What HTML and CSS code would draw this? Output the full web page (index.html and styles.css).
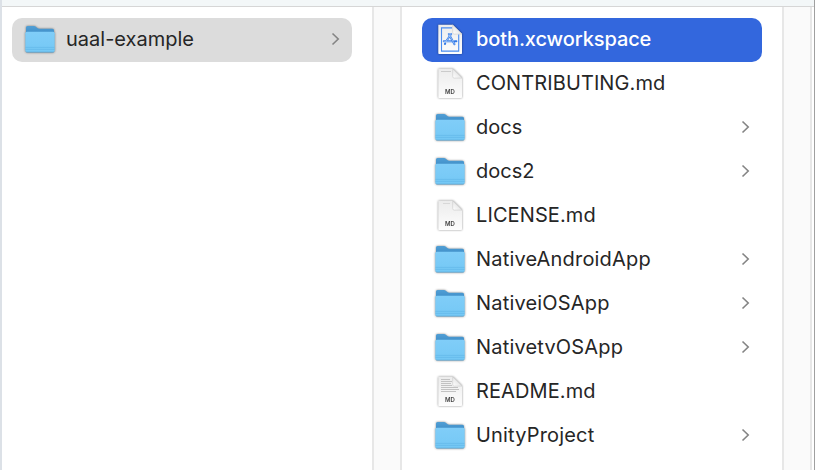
FILE: index.html
```
<!DOCTYPE html>
<html lang="en">
<head>
<meta charset="utf-8">
<title>uaal-example</title>
<link rel="stylesheet" href="styles.css">
</head>
<body>
<svg class="defs" width="0" height="0" aria-hidden="true">
  <defs>
    <linearGradient id="front" x1="0" y1="0" x2="0" y2="1"><stop offset="0" stop-color="#80cdf8"/><stop offset="1" stop-color="#74c8f5"/></linearGradient>
    <linearGradient id="back" x1="0" y1="0" x2="0" y2="1"><stop offset="0" stop-color="#519fd5"/><stop offset="1" stop-color="#307fbd"/></linearGradient>
    <linearGradient id="paper" x1="0" y1="0" x2="0" y2="1"><stop offset="0" stop-color="#ececec"/><stop offset="1" stop-color="#fdfdfd"/></linearGradient>
    <linearGradient id="fold" x1="0" y1="1" x2="1" y2="0"><stop offset="0" stop-color="#ffffff"/><stop offset="1" stop-color="#d4d4d4"/></linearGradient>
  </defs>
  <symbol id="folder" viewBox="0 0 32 36">
    <path d="M2 5.500Q2 4 3.500 4H10q1 0 1.800.8l1.500 1.200q.8.800 1.900.800h13.300q1.500 0 1.500 1.500V18H2z" fill="url(#back)"/>
    <path d="M1.300 11.300Q1.300 9.800 2.800 9.800h26.400q1.500 0 1.500 1.500v17.200q0 1.700-1.700 1.700H3q-1.700 0-1.700-1.700z" fill="url(#front)"/>
    <path d="M1.500 25.400h29M1.500 27.400h29" stroke="#5fb4e5" stroke-width=".6"/>
    <path d="M1.800 29.700q.5.500 1.200.5h26q.7 0 1.200-.5" fill="none" stroke="#4c96c3" stroke-width=".6"/>
  </symbol>
  <symbol id="page" viewBox="0 0 32 36">
    <path d="M4.300 2.800h14.400l9.300 9.300v19.200q0 .8-.8.800H5.100q-.8 0-.8-.8z" fill="url(#paper)"/>
    <path d="M18.700 2.800v7.700q0 1.600 1.600 1.600H28z" fill="url(#fold)" stroke="#c2c2c2" stroke-width=".5"/>
  </symbol>
  <symbol id="chevron" viewBox="0 0 10 14">
    <path d="M1.500 1.500L7.200 7l-5.700 5.500" fill="none" stroke="currentColor" stroke-width="1.600"/>
  </symbol>
</svg>
<div class="toolbar"></div>
<main class="browser">
  <ul class="column">
    <li class="row current"><svg class="icon"><use href="#folder"/></svg><span class="name">uaal-example</span><svg class="chevron"><use href="#chevron"/></svg></li>
  </ul>
  <div class="gutter"></div>
  <ul class="column second">
    <li class="row selected">
      <svg class="icon" viewBox="0 0 32 36"><use href="#page" width="32" height="36"/>
        <path d="M18 5.900H7.500v23.200h17.200V12.500" fill="none" stroke="#4a8cf0" stroke-width="1.100"/>
        <g fill="none" stroke="#2f78e8" stroke-width="2" stroke-linecap="round"><path d="M14.800 12l5.700 10.200M17.200 12l-5 7.300M9.800 19.300h7.600M20.800 19.300h1.600M11.200 21.500l-.3.500"/></g>
        <path d="M14.800 12l5.700 10.200M17.200 12l-5 7.300M9.800 19.300h7.600" stroke="#e8f2ff" stroke-width=".55" stroke-linecap="round"/>
      </svg><span class="name">both.xcworkspace</span></li>
    <li class="row"><svg class="icon" viewBox="0 0 32 36"><use href="#page" width="32" height="36"/><path d="M7 5.500h10" stroke="#c2c2c2" stroke-width=".8"/><text class="kind" x="16" y="27.800">MD</text></svg><span class="name wide">CONTRIBUTING.md</span></li>
    <li class="row"><svg class="icon"><use href="#folder"/></svg><span class="name">docs</span><svg class="chevron"><use href="#chevron"/></svg></li>
    <li class="row"><svg class="icon"><use href="#folder"/></svg><span class="name">docs2</span><svg class="chevron"><use href="#chevron"/></svg></li>
    <li class="row"><svg class="icon" viewBox="0 0 32 36"><use href="#page" width="32" height="36"/><path d="M9 5.500h7" stroke="#d2d2d2" stroke-width=".8"/><text class="kind" x="16" y="27.800">MD</text></svg><span class="name wide">LICENSE.md</span></li>
    <li class="row"><svg class="icon"><use href="#folder"/></svg><span class="name wider">NativeAndroidApp</span><svg class="chevron"><use href="#chevron"/></svg></li>
    <li class="row"><svg class="icon"><use href="#folder"/></svg><span class="name wider">NativeiOSApp</span><svg class="chevron"><use href="#chevron"/></svg></li>
    <li class="row"><svg class="icon"><use href="#folder"/></svg><span class="name wider">NativetvOSApp</span><svg class="chevron"><use href="#chevron"/></svg></li>
    <li class="row"><svg class="icon" viewBox="0 0 32 36"><use href="#page" width="32" height="36"/><path d="M7 5.500h9M7 7.500h11M7 9.500h10M7 11.500h11M7 13.500h17M7 15.500h18M7 17.500h15" stroke="#c2c2c2" stroke-width="1"/><text class="kind" x="16" y="27.800">MD</text></svg><span class="name wide">README.md</span></li>
    <li class="row"><svg class="icon"><use href="#folder"/></svg><span class="name wider">UnityProject</span><svg class="chevron"><use href="#chevron"/></svg></li>
  </ul>
  <div class="gutter"></div>
</main>
</body>
</html>
```
FILE: styles.css
```
* { box-sizing: border-box; }
body {
  margin: 0;
  width: 815px;
  height: 470px;
  overflow: hidden;
  display: flex;
  flex-direction: column;
  background: #fff;
  border-left: 2px solid #dce1e7;
  border-right: 1px solid #a0a0a0;
  font: 20px/44px Inter, "Liberation Sans", sans-serif;
  color: #262626;
}
.defs { position: absolute; }
.toolbar { flex: none; height: 7px; background: #f3f7f8; border-bottom: 1px solid #d6d6d6; }
.browser { flex: 1; min-height: 0; display: flex; }
.column { flex: none; width: 370px; margin: 0; padding: 11px 20px 0 10px; list-style: none; }
.second { width: 380px; padding-left: 20px; }
.gutter {
  flex: none;
  width: 30px;
  background: #fafafa;
  border: solid #e7e7e7;
  border-width: 0 2px;
}
.row { display: flex; align-items: center; height: 44px; padding: 0 11px 0 12px; border-radius: 10px; }
.current { background: #dcdcdc; }
.selected { background: #3367dd; color: #fff; font-weight: 500; letter-spacing: -.1px; }
.icon { flex: none; width: 32px; height: 36px; margin-right: 10px; filter: drop-shadow(0 .6px .8px rgba(0, 0, 0, .45)); }
.name { white-space: nowrap; padding-bottom: 2px; }
.wide { letter-spacing: .1px; }
.wider { letter-spacing: .18px; }
.chevron { width: 10px; height: 14px; margin: 0 0 2px auto; color: #848484; }
.kind { font: 600 6px/1 Inter, sans-serif; fill: #444; text-anchor: middle; }
```
